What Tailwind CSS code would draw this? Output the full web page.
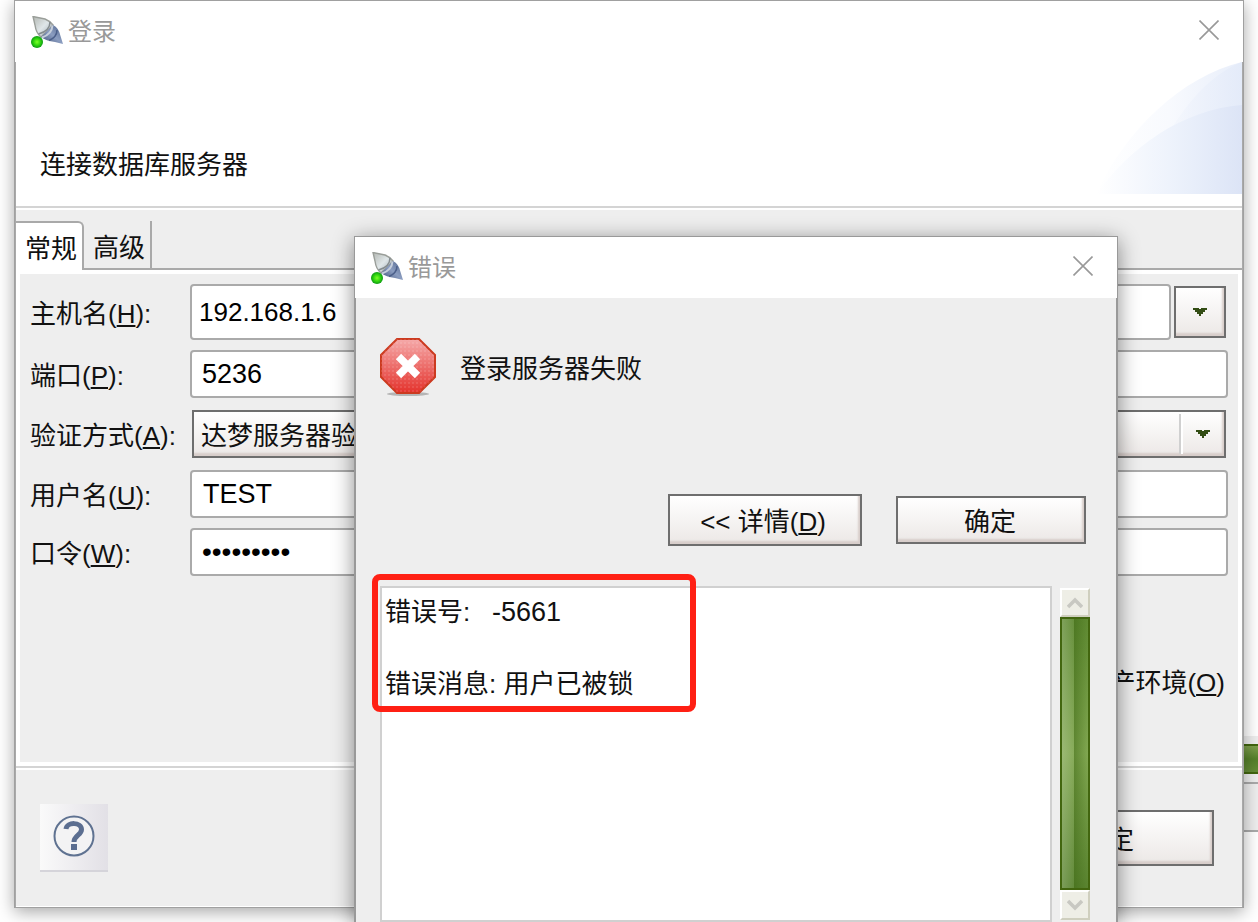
<!DOCTYPE html>
<html lang="zh-CN">
<head>
  <meta charset="UTF-8">
  <meta name="viewport" content="width=device-width, initial-scale=1">
  <title>登录</title>
  <script src="https://cdn.jsdelivr.net/npm/@tailwindcss/browser@4"></script>
</head>
<body class="relative h-screen overflow-hidden bg-white font-['Liberation_Sans','Noto_Sans_CJK_SC',sans-serif] text-[26px] leading-8 text-[#111]">

  <svg class="absolute size-0" aria-hidden="true">
    <defs>
      <linearGradient id="plugLight" x1="0" y1="0" x2="1" y2="1">
        <stop offset="0" stop-color="#b3b7b2"/><stop offset=".5" stop-color="#dfe6e8"/><stop offset="1" stop-color="#9aa6b0"/>
      </linearGradient>
      <linearGradient id="plugDark" x1="1" y1="0" x2="0" y2="1">
        <stop offset="0" stop-color="#50648c"/><stop offset=".5" stop-color="#8b9dc0"/><stop offset="1" stop-color="#3d4f78"/>
      </linearGradient>
      <radialGradient id="led"><stop offset="0" stop-color="#7dff2a"/><stop offset=".5" stop-color="#38dc10"/><stop offset="1" stop-color="#0c9a12"/></radialGradient>
      <symbol id="plug" viewBox="0 0 32 32">
        <path d="M2 0.500L14 3Q19 5 22 9L10 21Q5 17 4 9Z" fill="url(#plugLight)" stroke="#9a9e99" stroke-width="1.4"/>
        <path d="M22 9Q28 12 29.500 20L32 28L24 26Q15 25 10 21Z" fill="url(#plugDark)"/>
        <path d="M19 6Q19 15 7.500 18" fill="none" stroke="#848b8e" stroke-width="1.5"/>
        <path d="M21.500 9.500Q21 18 11 21.500" fill="none" stroke="#c5cedb" stroke-width="2"/>
        <path d="M26 14Q26 21 18 24.500" fill="none" stroke="#4b5f89" stroke-width="1.5"/>
        <circle cx="6" cy="26" r="6" fill="url(#led)"/>
      </symbol>
      <symbol id="arrow" viewBox="0 0 14 8">
        <path d="M0 0H6V1H8V0H14V2H12V4H10V6H8V8H6V6H4V4H2V2H0Z" fill="#334d14"/>
      </symbol>
    </defs>
  </svg>

  <!-- window behind -->
  <div class="absolute right-0 top-[736px] flex h-24 w-4 flex-col border-b-2 border-[#aaa] bg-[#eee]">
    <div class="mt-2 h-[30px] border-y-2 border-[#42660f] bg-linear-to-b from-[#7ea04c] via-[#55802a] to-[#648c36]"></div>
    <div class="mt-2 border-t-2 border-[#aaa]"></div>
  </div>

  <!-- login window -->
  <section class="absolute left-[14px] right-[14px] top-0 flex h-[908px] flex-col border border-[#a0a0a0] bg-white shadow-[0_4px_16px_rgba(0,0,0,0.35)]">
    <header class="flex h-[61px] shrink-0 items-center pb-1 pl-4 pr-[23px] text-2xl text-[#999]">
      <svg class="mt-1 size-8"><use href="#plug"/></svg>
      <h1 class="ml-[5px] grow font-['Noto_Sans_CJK_SC',sans-serif]">登录</h1>
      <button aria-label="关闭" class="p-px"><svg class="size-5" viewBox="0 0 20 20"><path d="M0.5 0.5L19.5 19.5M19.5 0.5L0.5 19.5" stroke="#999" stroke-width="1.6"/></svg></button>
    </header>

    <div class="flex min-h-0 grow flex-col border-x border-[#a9a9a9]">
      <div class="relative h-36 shrink-0 pl-6 pt-[87px]">
        <svg class="absolute right-0 top-0 h-[132px] w-[146px]" viewBox="0 0 146 132">
          <defs>
            <linearGradient id="sky"><stop offset="0" stop-color="#fff"/><stop offset=".5" stop-color="#f8fafe"/><stop offset="1" stop-color="#e8eefa"/></linearGradient>
            <linearGradient id="skyInner"><stop offset="0" stop-color="#f3f6fd" stop-opacity="0"/><stop offset="1" stop-color="#e4ebf9"/></linearGradient>
            <linearGradient id="hill"><stop offset="0" stop-color="#fff"/><stop offset=".5" stop-color="#eef3fc"/><stop offset="1" stop-color="#dce4f6"/></linearGradient>
          </defs>
          <path d="M0 132C30 68 85 15 146 0V132Z" fill="url(#sky)"/>
          <path d="M46 132C65 70 105 15 146 0V132Z" fill="url(#skyInner)"/>
          <path d="M0 132C35 85 85 48 146 43V132Z" fill="url(#hill)"/>
        </svg>
        <p class="relative">连接数据库服务器</p>
      </div>

      <div class="flex grow flex-col border-t-2 border-[#d4d4d4]">
        <!-- tabs -->
        <div class="flex h-[62px] shrink-0 items-end border-t-2 border-white bg-[#eee]">
          <button class="h-[49px] rounded-tr-md border-r-2 border-t-2 border-[#a9a9a9] bg-white pl-[9px] pr-[5px] pt-1">常规</button>
          <button class="h-[49px] border-b-2 border-r-2 border-[#a9a9a9] pl-[9px] pr-[5px] pt-1.5">高级</button>
          <div class="grow self-end border-b-2 border-[#a9a9a9]"></div>
        </div>

        <form class="mx-1 mt-1 grow bg-[#eee] pr-[10px]">
          <div class="grid grid-cols-[160px_1fr] pl-[10px] pt-[10px]">
            <label for="host" class="self-center pt-1">主机名(<u>H</u>):</label>
            <div class="flex h-14 items-center gap-[3px]">
              <input id="host" value="192.168.1.6" class="h-14 min-w-0 grow rounded border-2 border-[#aaa] bg-white px-[7px] text-black">
              <button type="button" aria-label="主机列表" class="mr-0.5 flex h-[52px] w-[52px] items-center justify-center border-2 border-[#6e6e6e] bg-linear-to-b from-white to-[#ece8e6] shadow-[inset_-2px_-3px_2px_#d8cecb]"><svg class="h-2 w-3.5"><use href="#arrow"/></svg></button>
            </div>
          </div>
          <div class="grid grid-cols-[160px_1fr] gap-y-3 pl-[10px] pt-[10px]">
            <label for="port" class="self-center pt-1">端口(<u>P</u>):</label>
            <input id="port" value="5236" class="h-12 min-w-0 rounded border-2 border-[#aaa] bg-white px-2.5 text-[27px] text-black">

            <label for="auth" class="self-center pt-1">验证方式(<u>A</u>):</label>
            <div class="relative mx-0.5">
              <select id="auth" class="h-12 w-full appearance-none border-2 border-[#6e6e6e] bg-linear-to-b from-white to-[#ece8e6] px-[7px] pt-1 shadow-[inset_-2px_-3px_2px_#d8cecb]"><option>达梦服务器验证</option></select>
              <div class="pointer-events-none absolute inset-y-1 right-0.5 flex w-[45px] items-center justify-center border-l-2 border-[#d0d0d0] shadow-[inset_2px_0_#fff]"><svg class="h-2 w-3.5"><use href="#arrow"/></svg></div>
            </div>

            <label for="user" class="self-center pt-1">用户名(<u>U</u>):</label>
            <input id="user" value="TEST" class="h-12 min-w-0 rounded border-2 border-[#aaa] bg-white px-[11px] text-[27px] text-black">
          </div>
          <div class="grid grid-cols-[160px_1fr] pl-[10px] pt-[10px]">
            <label for="password" class="self-center pt-1">口令(<u>W</u>):</label>
            <input id="password" type="password" value="123456789" class="h-12 min-w-0 rounded border-2 border-[#aaa] bg-white px-2.5 text-[28px] text-black">
          </div>
          <label class="mr-[3px] mt-[91px] flex items-center justify-end gap-2"><input type="checkbox" class="size-5"><span>生产环境(<u>O</u>)</span></label>
        </form>

        <footer class="mt-1 flex h-[141px] shrink-0 items-start justify-between border-t-2 border-[#d4d4d4] bg-[#eee] pl-6 pr-7 shadow-[inset_0_2px_#fff,inset_0_-1px_#fff]">
          <button aria-label="帮助" class="mt-9 flex h-[68px] w-[68px] items-center justify-center border-b-2 border-[#d5d4da] bg-linear-to-r from-[#fafafa] to-[#e2e0e6]">
            <svg class="size-11" viewBox="0 0 44 44" fill="none">
              <circle cx="22" cy="21" r="19.5" fill="#f3f3f4" stroke="#5f7291" stroke-width="2"/>
              <path d="M14 14C15 6.500 29.500 7 29.500 14.500C29.500 20 22 20.500 22 27" stroke="#5b6e90" stroke-width="5"/>
              <path d="M19 29H25V35H19Z" fill="#5b6e90"/>
            </svg>
          </button>
          <button class="mt-[42px] h-14 w-[208px] border-2 border-[#6e6e6e] bg-linear-to-b from-white to-[#ece8e6] pr-1 pt-1 shadow-[inset_-2px_-3px_2px_#d8cecb]">确定</button>
        </footer>
      </div>
    </div>
  </section>

  <!-- error dialog -->
  <section role="dialog" aria-labelledby="error-title" class="absolute bottom-0 left-[354px] right-[140px] top-[236px] flex flex-col border border-b-0 border-[#999] bg-[#eee] shadow-[0_4px_20px_rgba(0,0,0,0.45)]">
    <header class="flex h-[61px] shrink-0 items-center bg-white pb-1 pl-4 pr-[23px] text-2xl text-[#999]">
      <svg class="mt-1 size-8"><use href="#plug"/></svg>
      <h2 id="error-title" class="ml-[5px] grow font-['Noto_Sans_CJK_SC',sans-serif]">错误</h2>
      <button aria-label="关闭" class="p-px"><svg class="size-5" viewBox="0 0 20 20"><path d="M0.5 0.5L19.5 19.5M19.5 0.5L0.5 19.5" stroke="#999" stroke-width="1.6"/></svg></button>
    </header>

    <div class="flex min-h-0 grow flex-col border-x border-[#999] pl-6 pr-[26px]">
      <div class="mt-10 flex h-[60px] items-center gap-6">
        <svg class="h-[60px] w-14" viewBox="0 0 56 60">
          <defs>
            <linearGradient id="stop" x1="0" y1="0" x2="0" y2="1"><stop offset="0" stop-color="#f5aaaa"/><stop offset="1" stop-color="#e4322c"/></linearGradient>
            <pattern id="dots" width="4" height="4" patternUnits="userSpaceOnUse"><path d="M0 0H2V2H0Z" fill="#fff" fill-opacity=".1"/></pattern>
          </defs>
          <ellipse cx="28" cy="56" rx="21" ry="2" fill="#b5b5b5"/>
          <path d="M17 1H39L55 17V39L39 55H17L1 39V17Z" fill="url(#stop)" stroke="#cc3a20" stroke-width="2"/>
          <path d="M17 1H39L55 17V39L39 55H17L1 39V17Z" fill="url(#dots)"/>
          <path d="M18.500 18.500L37.500 37.500M37.500 18.500L18.500 37.500" stroke="#fff" stroke-width="7.500"/>
        </svg>
        <p class="pt-0.5">登录服务器失败</p>
      </div>
      <div class="mt-24 flex shrink-0 items-center justify-end gap-[34px] pr-1">
        <button class="h-[52px] w-[194px] border-2 border-[#6e6e6e] bg-linear-to-b from-white to-[#ece8e6] pr-1 pt-1 shadow-[inset_-2px_-3px_2px_#d8cecb]">&lt;&lt; 详情(<u>D</u>)</button>
        <button class="h-12 w-[190px] border-2 border-[#6e6e6e] bg-linear-to-b from-white to-[#ece8e6] pr-0.5 pt-1 shadow-[inset_-2px_-3px_2px_#d8cecb]">确定</button>
      </div>

      <div class="mt-10 flex min-h-0 grow gap-2">
        <div class="relative grow border-2 border-[#d0d0d0] bg-white pl-[3px] pt-1.5">
          <p class="whitespace-pre leading-9">错误号:   <span class="text-[27px]">-5661</span></p>
          <p class="mt-9 leading-9">错误消息: 用户已被锁</p>
          <div class="pointer-events-none absolute -left-[10px] -top-3.5 h-[138px] w-[324px] rounded-lg border-6 border-[#ff2014]"></div>
        </div>
        <div class="mb-0.5 mt-0.5 flex w-[30px] flex-col">
          <button aria-label="向上滚动" class="flex h-[29px] items-center justify-center border-2 border-b-[#cfcfbe] border-l-white border-r-[#cfcfbe] border-t-white bg-[#eeeee6]"><svg class="h-3 w-4" viewBox="0 0 16 12"><path d="M1 10L8 3L15 10" fill="none" stroke="#c8c8c2" stroke-width="3.500"/></svg></button>
          <div class="relative grow border-2 border-[#42660f] bg-linear-to-b from-[#5f8a32] via-[#82a852] to-[#5a8430]">
            <div class="absolute inset-y-0 left-0 w-3 bg-linear-to-r from-white/20 to-white/5"></div>
            <div class="absolute inset-y-0 left-3 right-0 bg-linear-to-r from-[#3c6612]/50 to-transparent"></div>
          </div>
          <button aria-label="向下滚动" class="flex h-[30px] items-center justify-center border-2 border-b-[#cfcfbe] border-l-white border-r-[#cfcfbe] border-t-white bg-[#eeeee6]"><svg class="h-3 w-4" viewBox="0 0 16 12"><path d="M1 2L8 9L15 2" fill="none" stroke="#c8c8c2" stroke-width="3.500"/></svg></button>
        </div>
      </div>
    </div>
  </section>
</body>
</html>
